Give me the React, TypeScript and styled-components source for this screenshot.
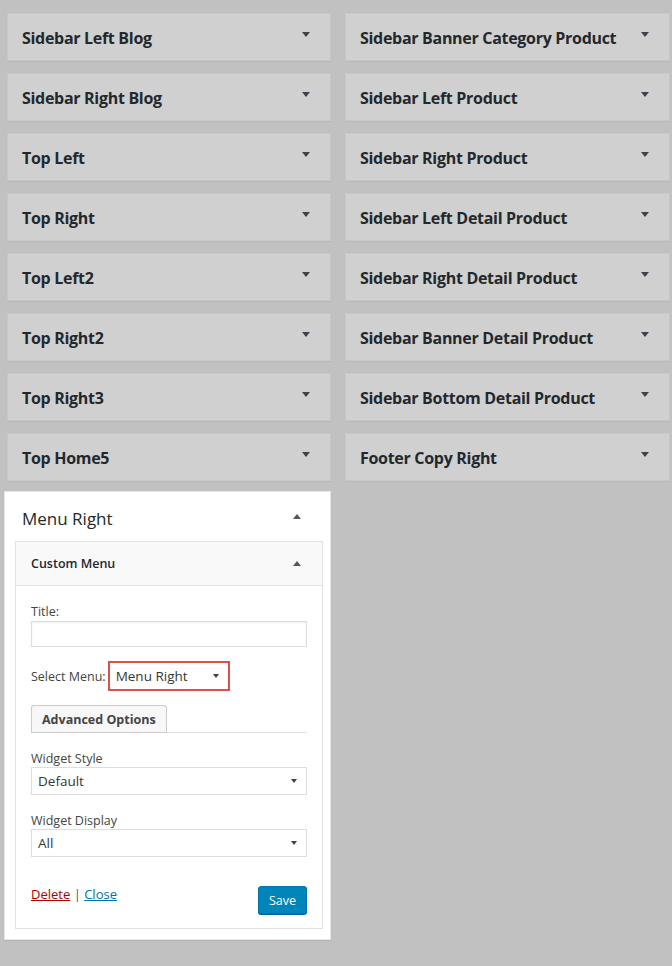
import React from 'react';
import styled, { createGlobalStyle } from 'styled-components';

const GlobalStyle = createGlobalStyle`
  body {
    margin: 0;
    background: #c1c1c1;
    font-family: 'Open Sans', 'Noto Sans', sans-serif;
    color: #23282d;
  }
`;

const leftWidgets = [
  'Sidebar Left Blog',
  'Sidebar Right Blog',
  'Top Left',
  'Top Right',
  'Top Left2',
  'Top Right2',
  'Top Right3',
  'Top Home5',
];

const rightWidgets = [
  'Sidebar Banner Category Product',
  'Sidebar Left Product',
  'Sidebar Right Product',
  'Sidebar Left Detail Product',
  'Sidebar Right Detail Product',
  'Sidebar Banner Detail Product',
  'Sidebar Bottom Detail Product',
  'Footer Copy Right',
];

const Page = styled.div`
  display: flex;
  gap: 14px;
  padding: 13px 0 0 7px;
  min-height: 966px;
  box-sizing: border-box;
`;

const Column = styled.div<{ $width: number }>`
  width: ${(p) => p.$width}px;
  display: flex;
  flex-direction: column;
  gap: 12px;
`;

const Bar = styled.div`
  height: 48px;
  box-sizing: border-box;
  background: #d0d0d0;
  border: 1px solid #c7c7c7;
  box-shadow: 0 1px 1px rgba(0, 0, 0, 0.04);
  display: flex;
  align-items: center;
  justify-content: space-between;
  padding: 0 20px 0 14px;
`;

const BarTitle = styled.span`
  font-size: 16px;
  font-weight: 700;
  letter-spacing: -0.3px;
  color: #23282d;
  margin-top: 2px;
`;

const Arrow = styled.span<{ $up?: boolean; $size?: number }>`
  width: 0;
  height: 0;
  border-left: ${(p) => p.$size ?? 4}px solid transparent;
  border-right: ${(p) => p.$size ?? 4}px solid transparent;
  ${(p) =>
    p.$up
      ? `border-bottom: ${(p.$size ?? 4) + 1}px solid #50575e;`
      : `border-top: ${(p.$size ?? 4) + 1}px solid #3c434a;`}
`;

const BarArrow = styled(Arrow)`
  align-self: flex-start;
  margin-top: 18px;
`;

const Panel = styled.div`
  margin: -2px 0 0 -3px;
  width: 327px;
  box-sizing: border-box;
  background: #fff;
  border: 1px solid #e5e5e5;
  box-shadow: 0 1px 1px rgba(0, 0, 0, 0.06);
  padding: 0 7px 10px 10px;
`;

const PanelHead = styled.div`
  height: 49px;
  display: flex;
  align-items: center;
  justify-content: space-between;
  padding: 0 22px 0 7px;
`;

const PanelTitle = styled.span`
  font-size: 17px;
  font-weight: 400;
  margin-top: 4px;
`;

const Inner = styled.div`
  border: 1px solid #e2e2e2;
`;

const InnerHead = styled.div`
  height: 43px;
  background: #f9f9f9;
  border-bottom: 1px solid #e2e2e2;
  display: flex;
  align-items: center;
  justify-content: space-between;
  padding: 0 21px 0 15px;
`;

const InnerTitle = styled.span`
  font-size: 12.5px;
  font-weight: 600;
  color: #23282d;
`;

const Body = styled.div`
  padding: 17px 15px 14px 15px;
  font-size: 12.5px;
  color: #444;
`;

const Label = styled.div`
  line-height: 17px;
`;

const TextInput = styled.input`
  display: block;
  width: 100%;
  height: 26px;
  box-sizing: border-box;
  border: 1px solid #ddd;
  box-shadow: inset 0 1px 2px rgba(0, 0, 0, 0.07);
  margin: 1px 0 0;
`;

const InlineRow = styled.div`
  display: flex;
  align-items: center;
  gap: 2px;
  margin-top: 14px;
`;

const Highlight = styled.div`
  border: 2px solid #e14d4d;
`;

const SelectBox = styled.div<{ $width?: number }>`
  ${(p) => (p.$width ? `width: ${p.$width}px;` : '')}
  height: 28px;
  box-sizing: border-box;
  border: 1px solid #ddd;
  background: #fff;
  display: flex;
  align-items: center;
  justify-content: space-between;
  padding: 0 9px 0 6px;
  font-size: 13.5px;
  color: #32373c;
`;

const PlainSelect = styled(SelectBox)`
  border: none;
  height: 26px;
`;

const TabLine = styled.div`
  margin-top: 14px;
  border-bottom: 1px solid #ddd;
  display: flex;
`;

const TabButton = styled.button`
  font-family: inherit;
  font-size: 12.5px;
  font-weight: 700;
  color: #444;
  background: #f7f7f7;
  border: 1px solid #ccc;
  border-bottom: none;
  border-radius: 3px 3px 0 0;
  height: 27px;
  padding: 0 10px;
  box-shadow: 0 1px 0 #ccc;
`;

const Field = styled.div`
  margin-top: 17px;
`;

const Footer = styled.div`
  margin-top: 28px;
  display: flex;
  justify-content: space-between;
  align-items: flex-start;
`;

const Links = styled.div`
  font-size: 13px;
  color: #555;
`;

const LinkText = styled.a<{ $danger?: boolean }>`
  color: ${(p) => (p.$danger ? '#a00' : '#0073aa')};
  text-decoration: underline;
  cursor: pointer;
`;

const SaveButton = styled.button`
  font-family: inherit;
  font-size: 12.5px;
  color: #fff;
  background: #0085ba;
  border: 1px solid #0073aa;
  border-radius: 3px;
  box-shadow: 0 1px 0 #006799;
  height: 28px;
  padding: 0 10px;
  margin-top: 1px;
`;

function WidgetBar({ title }: { title: string }) {
  return (
    <Bar>
      <BarTitle>{title}</BarTitle>
      <BarArrow />
    </Bar>
  );
}

function Dropdown({ value }: { value: string }) {
  return (
    <SelectBox>
      <span>{value}</span>
      <Arrow $size={3} />
    </SelectBox>
  );
}

export default function App() {
  return (
    <>
      <GlobalStyle />
      <Page>
        <Column $width={324}>
          {leftWidgets.map((w) => (
            <WidgetBar key={w} title={w} />
          ))}
          <Panel>
            <PanelHead>
              <PanelTitle>Menu Right</PanelTitle>
              <Arrow $up />
            </PanelHead>
            <Inner>
              <InnerHead>
                <InnerTitle>Custom Menu</InnerTitle>
                <Arrow $up />
              </InnerHead>
              <Body>
                <Label>Title:</Label>
                <TextInput type='text' />
                <InlineRow>
                  <span>Select Menu:</span>
                  <Highlight>
                    <PlainSelect $width={118}>
                      <span>Menu Right</span>
                      <Arrow $size={3} />
                    </PlainSelect>
                  </Highlight>
                </InlineRow>
                <TabLine>
                  <TabButton>Advanced Options</TabButton>
                </TabLine>
                <Field>
                  <Label>Widget Style</Label>
                  <Dropdown value='Default' />
                </Field>
                <Field>
                  <Label>Widget Display</Label>
                  <Dropdown value='All' />
                </Field>
                <Footer>
                  <Links>
                    <LinkText $danger>Delete</LinkText> |{' '}
                    <LinkText>Close</LinkText>
                  </Links>
                  <SaveButton>Save</SaveButton>
                </Footer>
              </Body>
            </Inner>
          </Panel>
        </Column>
        <Column $width={325}>
          {rightWidgets.map((w) => (
            <WidgetBar key={w} title={w} />
          ))}
        </Column>
      </Page>
    </>
  );
}
